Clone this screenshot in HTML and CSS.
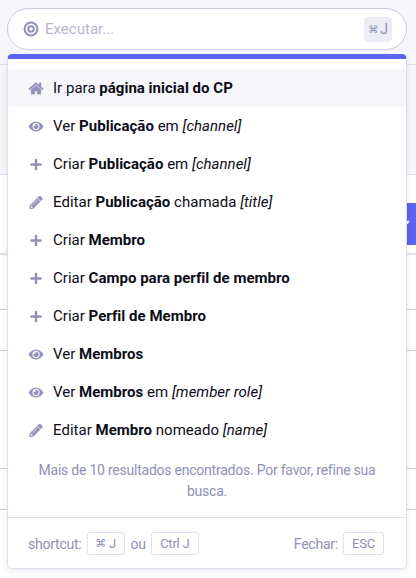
FILE: index.html
```html
<!DOCTYPE html>
<html lang="pt">
<head>
<meta charset="utf-8">
<title>Jump menu</title>
<link rel="stylesheet" href="styles.css">
</head>
<body>
<svg width="0" height="0" class="sprite" aria-hidden="true">
  <symbol id="home" viewBox="0 0 576 512"><path stroke="#9292b8" stroke-width="14" d="M280.37 148.26L96 300.11V464a16 16 0 0 0 16 16l112.06-.29a16 16 0 0 0 15.92-16V368a16 16 0 0 1 16-16h64a16 16 0 0 1 16 16v95.64a16 16 0 0 0 16 16.05L464 480a16 16 0 0 0 16-16V300L295.67 148.26a12.19 12.19 0 0 0-15.3 0zM571.6 251.47L488 182.56V44.05a12 12 0 0 0-12-12h-56a12 12 0 0 0-12 12v72.61L318.47 43a48 48 0 0 0-61 0L4.34 251.47a12 12 0 0 0-1.6 16.9l25.5 31A12 12 0 0 0 45.15 301l235.22-193.74a12.19 12.19 0 0 1 15.3 0L530.9 301a12 12 0 0 0 16.9-1.6l25.5-31a12 12 0 0 0-1.7-16.93z"/></symbol>
  <symbol id="eye" viewBox="0 0 576 512"><path stroke="#9292b8" stroke-width="8" d="M572.52 241.4C518.29 135.59 410.93 64 288 64S57.68 135.64 3.48 241.41a32.35 32.35 0 0 0 0 29.19C57.71 376.41 165.07 448 288 448s230.32-71.64 284.52-177.41a32.35 32.35 0 0 0 0-29.19zM288 400a144 144 0 1 1 144-144 143.93 143.93 0 0 1-144 144zm0-240a95.31 95.31 0 0 0-25.31 3.79 47.85 47.85 0 0 1-66.9 66.9A95.78 95.78 0 1 0 288 160z"/></symbol>
  <symbol id="plus" viewBox="0 0 448 512"><path d="M416 208H272V64c0-17.67-14.33-32-32-32h-32c-17.67 0-32 14.33-32 32v144H32c-17.67 0-32 14.33-32 32v32c0 17.67 14.33 32 32 32h144v144c0 17.67 14.33 32 32 32h32c17.67 0 32-14.33 32-32V304h144c17.67 0 32-14.33 32-32v-32c0-17.67-14.33-32-32-32z"/></symbol>
  <symbol id="pencil" viewBox="0 0 512 512"><path stroke="#9292b8" stroke-width="14" d="M497.9 142.1l-46.1 46.1c-4.7 4.7-12.3 4.7-17 0l-111-111c-4.7-4.7-4.7-12.3 0-17l46.1-46.1c18.7-18.7 49.1-18.7 67.9 0l60.1 60.1c18.8 18.7 18.8 49.1 0 67.9zM284.2 99.8L21.6 362.4.4 483.9c-2.9 16.4 11.4 30.6 27.8 27.8l121.5-21.3 262.6-262.6c4.7-4.7 4.7-12.3 0-17l-111-111c-4.8-4.7-12.4-4.7-17.1 0zM124.1 339.9c-5.5-5.5-5.5-14.3 0-19.8l154-154c5.5-5.5 14.3-5.5 19.8 0s5.5 14.3 0 19.8l-154 154c-5.5 5.5-14.3 5.5-19.8 0zM88 424h48v36.3l-64.5 11.3-31.1-31.1L51.7 376H88v48z"/></symbol>
</svg>

<div class="page">
  <div class="topbar"></div>
  <div class="heading"></div>
  <div class="toolbar"><span class="button"><svg viewBox="0 0 10 6"><path d="M1 1l4 4 4-4"/></svg></span></div>
  <div class="row row-head"></div>
  <div class="row row-a"></div>
  <div class="row row-b"></div>
  <div class="row row-a"></div>
</div>

<div class="jump">
  <div class="search">
    <svg class="target" viewBox="0 0 16 16"><circle cx="8" cy="8" r="6.4"/><circle cx="8" cy="8" r="2.8"/></svg>
    <span class="placeholder">Executar...</span>
    <span class="key"><span class="cmd">⌘</span><span>J</span></span>
  </div>
  <div class="menu">
    <div class="items">
      <div class="item active"><svg><use href="#home"/></svg><span>Ir para <b>página inicial do CP</b></span></div>
      <div class="item"><svg><use href="#eye"/></svg><span>Ver <b>Publicação</b> em <i>[channel]</i></span></div>
      <div class="item"><svg><use href="#plus"/></svg><span>Criar <b>Publicação</b> em <i>[channel]</i></span></div>
      <div class="item"><svg><use href="#pencil"/></svg><span>Editar <b>Publicação</b> chamada <i>[title]</i></span></div>
      <div class="item"><svg><use href="#plus"/></svg><span>Criar <b>Membro</b></span></div>
      <div class="item"><svg><use href="#plus"/></svg><span>Criar <b>Campo para perfil de membro</b></span></div>
      <div class="item"><svg><use href="#plus"/></svg><span>Criar <b>Perfil de Membro</b></span></div>
      <div class="item"><svg><use href="#eye"/></svg><span>Ver <b>Membros</b></span></div>
      <div class="item"><svg><use href="#eye"/></svg><span>Ver <b>Membros</b> em <i>[member role]</i></span></div>
      <div class="item"><svg><use href="#pencil"/></svg><span>Editar <b>Membro</b> nomeado <i>[name]</i></span></div>
    </div>
    <p class="more">Mais de 10 resultados encontrados. Por favor, refine sua busca.</p>
    <div class="footer">
      <span>shortcut:</span><kbd class="k1"><span class="cmd">⌘</span> J</kbd><span>ou</span><kbd class="k2">Ctrl J</kbd>
      <span class="close">Fechar:</span><kbd class="k3">ESC</kbd>
    </div>
  </div>
</div>
</body>
</html>
```
FILE: styles.css
```css
* { box-sizing: border-box; }
body {
  margin: 0;
  height: 578px;
  overflow: hidden;
  background: #fff;
  color: #0d0d19;
  font-family: Roboto, "DejaVu Sans", sans-serif;
  font-size: 15px;
}
.sprite { position: absolute; }

.topbar { height: 65px; background: #f7f7fb; border-bottom: 1px solid #dfe0ef; }
.heading { height: 110px; background: #f7f7fb; border-bottom: 1px solid #dfe0ef; }
.toolbar { height: 78px; padding-top: 28px; display: flex; justify-content: flex-end; }
.button { width: 30px; height: 42px; background: #5d63f1; padding: 17px 0 0 14px; }
.button svg { display: block; width: 10px; height: 6px; fill: none; stroke: #fff; stroke-width: 2; }
.row { border-bottom: 1px solid #cbcbda; }
.row-head { height: 57px; border-top: 2px solid #dfe0ef; }
.row-a { height: 41px; }
.row-b { height: 118px; }

.jump { position: absolute; top: 8px; left: 7px; width: 400px; }
.search {
  height: 42px;
  display: flex;
  align-items: center;
  padding: 0 14px 0 16px;
  background: #fff;
  border: 1px solid #cbcbda;
  border-radius: 21px;
}
.target { width: 16px; height: 16px; margin-left: -1px; fill: none; stroke: #9292b8; stroke-width: 2; }
.placeholder { margin-left: 6px; color: #b5b5cd; letter-spacing: .02px; }
.key {
  margin-left: auto;
  width: 28px;
  height: 25px;
  display: flex;
  align-items: center;
  justify-content: center;
  gap: 2px;
  background: #ecedf5;
  border-radius: 4px;
  color: #8f90b5;
  font-size: 14px;
}
.key .cmd { font-size: 10px; }

.menu {
  margin-top: 4px;
  height: 515px;
  background: #fff;
  border: 1px solid #dfe0ef;
  border-top: 5px solid #5d63f1;
  border-radius: 5px;
  box-shadow: 0 2px 6px rgba(40, 40, 90, .1);
}
.items { padding-top: 10px; letter-spacing: .02px; }
.item { height: 38px; display: flex; align-items: center; padding-left: 20px; }
.item svg { width: 16px; height: 13px; margin-right: 9px; fill: #9292b8; }
.active { background: #f7f7fb; }
b { font-weight: 700; }
.more {
  margin: 0;
  height: 68px;
  padding: 11px 28px 0;
  text-align: center;
  font-size: 14px;
  letter-spacing: -.23px;
  line-height: 21px;
  color: #8f90b5;
}
.footer {
  height: 52px;
  border-top: 1px solid #dfe0ef;
  padding: 0 22px 0 20px;
  display: flex;
  align-items: center;
  color: #8f90b5;
  font-size: 14px;
  letter-spacing: -.23px;
}
kbd {
  height: 23px;
  display: flex;
  align-items: center;
  justify-content: center;
  border: 1px solid #dfdff2;
  border-radius: 3px;
  font-family: inherit;
  font-size: 13px;
  white-space: pre;
}
.k1 { width: 38px; margin: 0 6px 0 5px; }
.k1 .cmd { font-size: 11px; }
.k2 { width: 48px; margin-left: 5px; }
.k3 { width: 41px; margin-left: 5px; }
.close { margin-left: auto; }
```
